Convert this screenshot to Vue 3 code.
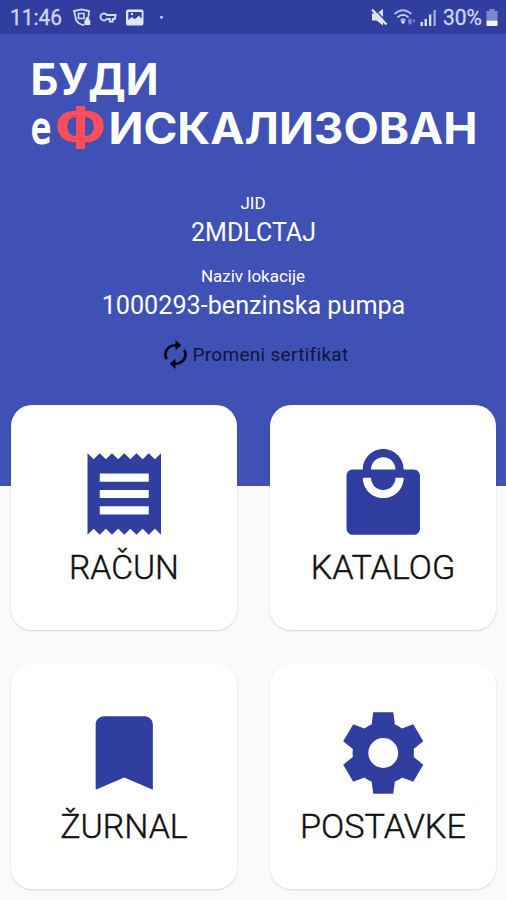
<script setup>
const tiles = [
  { name: 'receipt', label: 'RAČUN', width: 106 },
  { name: 'bag', label: 'KATALOG', width: 140.5 },
  { name: 'bookmark', label: 'ŽURNAL', width: 123.5 },
  { name: 'gear', label: 'POSTAVKE', width: 162 },
]

const paths = {
  receipt:
    'M18 17H6v-2h12v2zm0-4H6v-2h12v2zm0-4H6V7h12v2zM3 22l1.5-1.5L6 22l1.5-1.5L9 22l1.5-1.5L12 22l1.5-1.5L15 22l1.5-1.5L18 22l1.5-1.5L21 22V2l-1.5 1.5L18 2l-1.5 1.5L15 2l-1.5 1.5L12 2l-1.5 1.5L9 2 7.500 3.500 6 2 4.500 3.500 3 2v20z',
  bag:
    'M19.500 6h-2.500c0-2.760-2.240-5-5-5S7 3.240 7 6H4.500C3.700 6 3 6.700 3 7.500v13c0 .8.7 1.500 1.500 1.500h15c.8 0 1.500-.7 1.500-1.500v-13c0-.8-.7-1.500-1.500-1.500zM12 3c1.660 0 3 1.340 3 3H9c0-1.660 1.340-3 3-3zm0 10c-2.760 0-5-2.240-5-5h2c0 1.660 1.340 3 3 3s3-1.340 3-3h2c0 2.760-2.240 5-5 5z',
  bookmark: 'M17 3H7c-1.100 0-2 .9-2 2v16l7-3 7 3V5c0-1.100-.9-2-2-2z',
  gear:
    'M9.550 2h4.900l.4 3c.65.25 1.250.6 1.750 1l2.750-1.050 2.450 4.200-2.350 1.850c.08.7.08 1.300 0 2l2.350 1.850-2.450 4.200-2.750-1.050c-.5.4-1.100.75-1.750 1l-.4 3h-4.900l-.4-3c-.65-.25-1.250-.6-1.750-1l-2.750 1.050-2.450-4.200 2.350-1.850c-.08-.7-.08-1.300 0-2L2.200 9.150l2.450-4.200L7.400 6c.5-.4 1.100-.75 1.750-1zM12 8.350a3.650 3.650 0 1 0 0 7.300 3.650 3.650 0 1 0 0-7.300z',
}
</script>

<template>
  <div class="screen">
    <header class="status">
      <svg class="status-art" viewBox="0 0 506 34">
        <g class="status-text">
          <text x="10" y="25" textLength="52" lengthAdjust="spacingAndGlyphs">11:46</text>
          <text x="443" y="25" textLength="39" lengthAdjust="spacingAndGlyphs">30%</text>
        </g>
        <g fill="none" stroke="#d3d9f6" stroke-width="1.800">
          <path d="M84 25.300l-2.500-.8c-4-1.500-6-4-6-7.500l-1.500-6 7.500-1.700 7.500 1.700-.5 6" />
          <path d="M78.500 13.500h5.500v5h-5.500z" stroke-width="1.600" />
          <path d="M106.800 15a3.500 3.500 0 1 0 0 4h3v2.500h3V19h2l.8-4z" stroke-width="1.900" />
        </g>
        <path d="M85.500 20.500V19a1.900 1.900 0 0 1 3.800 0v1.500h1v4.500h-6v-4.500z" fill="#e1e5fb" />
        <path
          fill="#e1e5fb"
          fill-rule="evenodd"
          d="M128 9.500h13.500q2 0 2 2v12q0 2-2 2H128q-2 0-2-2v-12q0-2 2-2zM128.300 12v8l3.500-3 3 2.200 4-3.500 2.800 2.800V12zM131 13h2v2h-2z"
        />
        <circle cx="161.500" cy="17.300" r="1.400" fill="#d3d9f6" />
        <path d="M372 13.500h4.500l6.500-4.500v16.500l-6.500-5H372z" fill="#dfe4fb" />
        <path d="M374 9l13.500 13.500" stroke="#303f9f" stroke-width="1.500" />
        <path d="M372 9.500l14.500 15" stroke="#dfe4fb" stroke-width="2.400" />
        <g fill="none" stroke="#aeb8ea" stroke-width="1.700">
          <path d="M394.500 14q8.500-7.500 17 0" />
          <path d="M397.500 17.300q5.500-5 11 0" stroke="#d3d9f6" />
          <path d="M400.500 20.300q2.500-2.500 5 0" />
        </g>
        <circle cx="403" cy="22" r="1.800" fill="#e1e5fb" />
        <path d="M408 20l2-2 2 2v3l-2 2-2-2z" fill="#7481cb" />
        <path d="M413 19.500h2v3h-2z" fill="#7481cb" />
        <path d="M420.500 22h2.500v4h-2.500zM424.500 19h2.500v7h-2.500zM429 14.500h2.300V26H429z" fill="#d3d9f6" />
        <path d="M433.500 10h2.300v16h-2.300z" fill="#a2add9" />
        <path d="M489.500 9h5v2h3v9.500h-11V11h3z" fill="#7c88cd" />
        <path d="M486.500 20.500h11v4.500q0 1-1 1h-9q-1 0-1-1z" fill="#f4f5ff" />
      </svg>
    </header>

    <section class="hero">
      <svg class="brand" viewBox="0 0 506 130">
        <text class="brand-text" x="30.500" y="49.200" textLength="128" lengthAdjust="spacingAndGlyphs">БУДИ</text>
        <text class="brand-e" x="30.500" y="98" textLength="21" lengthAdjust="spacingAndGlyphs">е</text>
        <text class="brand-mark" x="57" y="102.500" textLength="47" lengthAdjust="spacingAndGlyphs">Ф</text>
        <text class="brand-text" x="108.500" y="98" textLength="369" lengthAdjust="spacingAndGlyphs">ИСКАЛИЗОВАН</text>
      </svg>
      <div class="caption">JID</div>
      <div class="value value-id">2MDLCTAJ</div>
      <div class="caption caption-place">Naziv lokacije</div>
      <div class="value value-place">1000293-benzinska pumpa</div>
      <div class="change">
        <svg class="renew" viewBox="4 1 16 22" preserveAspectRatio="none">
          <path d="M12 6v3l4-4-4-4v3c-4.420 0-8 3.580-8 8 0 1.570.46 3.030 1.240 4.260L6.700 14.800c-.45-.83-.7-1.790-.7-2.800 0-3.310 2.690-6 6-6zm6.760 1.740L17.300 9.200c.44.84.7 1.790.7 2.800 0 3.310-2.690 6-6 6v-3l-4 4 4 4v-3c4.420 0 8-3.580 8-8 0-1.570-.46-3.030-1.240-4.260z" />
        </svg>
        <span>Promeni sertifikat</span>
      </div>
    </section>

    <main class="grid">
      <div v-for="tile in tiles" :key="tile.name" class="tile">
        <svg class="icon" viewBox="0 0 24 24">
          <path :d="paths[tile.name]" fill-rule="evenodd" />
        </svg>
        <svg class="label" viewBox="0 0 200 48">
          <text x="100" y="36" text-anchor="middle" :textLength="tile.width + 4" lengthAdjust="spacingAndGlyphs">{{ tile.label }}</text>
        </svg>
      </div>
    </main>
  </div>
</template>

<style>
body {
  margin: 0;
}
</style>

<style scoped>
.screen {
  width: 506px;
  height: 900px;
  overflow: hidden;
  background: #fafafa;
  font-family: Roboto, sans-serif;
}
.status {
  height: 34px;
  background: #303f9f;
}
.status-art {
  display: block;
  width: 506px;
  height: 34px;
}
.status-text {
  font-size: 21.500px;
  fill: #cfd6f5;
  stroke: #cfd6f5;
  stroke-width: 0.300px;
}
.hero {
  box-sizing: border-box;
  height: 452px;
  padding-top: 12px;
  background: #3f51b5;
  display: flex;
  flex-direction: column;
  align-items: center;
  color: #fff;
}
.brand {
  width: 506px;
  height: 130px;
  flex: none;
}
.brand-text {
  font-family: Inter, sans-serif;
  font-weight: 700;
  font-size: 44px;
  fill: #fff;
}
.brand-e {
  font-family: "DejaVu Sans Mono", monospace;
  font-weight: 700;
  font-size: 47px;
  fill: #fff;
}
.brand-mark {
  font-family: "Liberation Mono", monospace;
  font-weight: 700;
  font-size: 64px;
  fill: #ff4d5a;
}
.caption {
  margin-top: 16px;
  line-height: 22px;
  font-size: 17px;
  white-space: nowrap;
}
.caption-place {
  margin-top: 15px;
}
.value {
  margin-top: 2px;
  padding-left: 1px;
  line-height: 34px;
  font-size: 25.200px;
  white-space: nowrap;
}
.value-id {
  font-size: 25px;
}
.change {
  display: flex;
  align-items: center;
  gap: 5px;
  margin-top: 17px;
  margin-left: 7px;
  color: #10153a;
  font-size: 19px;
  letter-spacing: 0.300px;
  line-height: 29px;
  white-space: nowrap;
}
.renew {
  width: 23px;
  height: 29px;
  fill: #060818;
}
.grid {
  display: grid;
  grid-template-columns: 225.500px 225.500px;
  grid-auto-rows: 225px;
  gap: 34px 33.500px;
  margin: -81px 0 0 11px;
}
.tile {
  box-sizing: border-box;
  padding-top: 40px;
  display: flex;
  flex-direction: column;
  align-items: center;
  border-radius: 21px;
  background: #fff;
  box-shadow: 0 1px 2px rgba(0, 0, 0, 0.150);
}
.icon {
  width: 98.500px;
  height: 98px;
  flex: none;
  fill: #303f9f;
}
.label {
  width: 200px;
  height: 48px;
  flex: none;
  font-size: 33.500px;
  font-weight: 300;
  fill: #111;
  stroke: #111;
  stroke-width: 0.400px;
}
</style>
